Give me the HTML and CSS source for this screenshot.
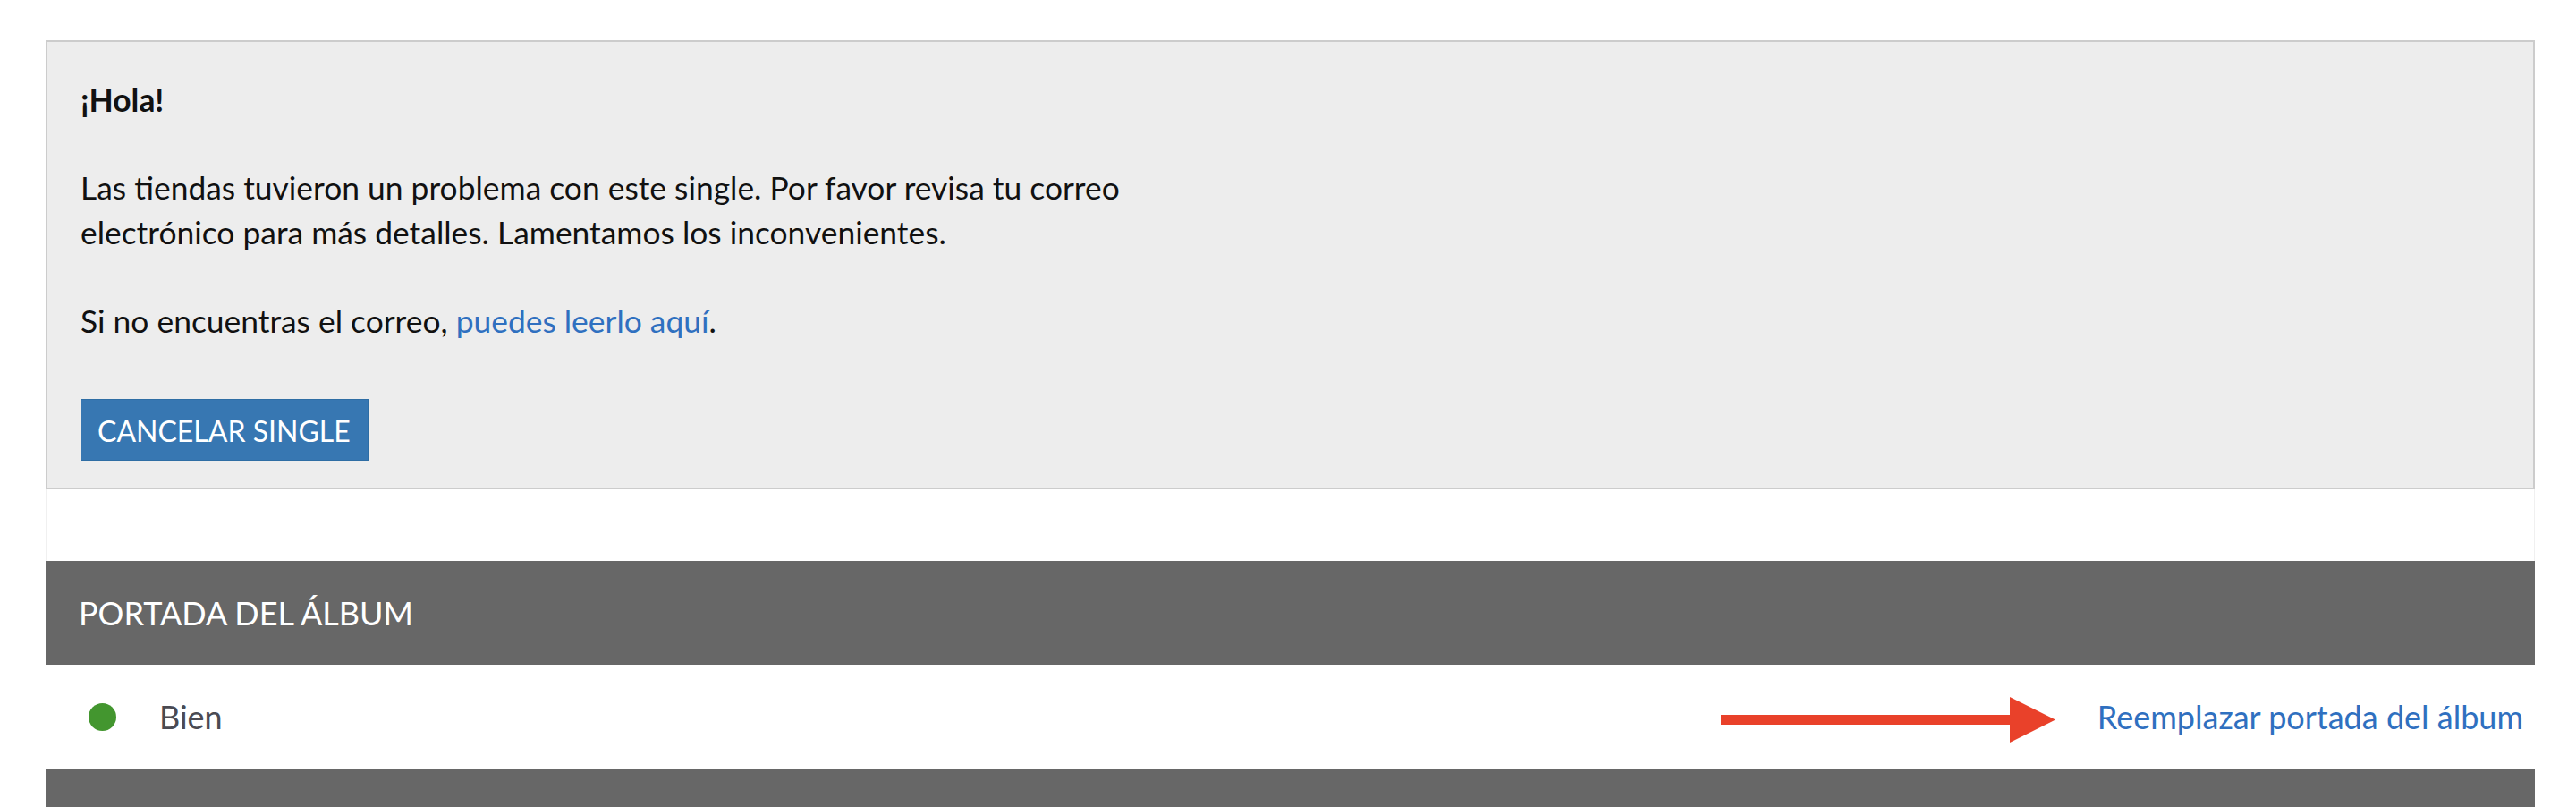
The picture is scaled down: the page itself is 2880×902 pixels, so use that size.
FILE: index.html
```html
<!DOCTYPE html>
<html lang="es">
<head>
<meta charset="utf-8">
<title>Single</title>
<link rel="stylesheet" href="styles.css">
</head>
<body>
<div class="page">
  <div class="notice">
    <p class="greet">¡Hola!</p>
    <p class="msg">Las tiendas tuvieron un problema con este single. Por favor revisa tu correo<br>electrónico para más detalles. Lamentamos los inconvenientes.</p>
    <p class="msg last">Si no encuentras el correo, <a href="#" class="inline-link">puedes leerlo aquí</a>.</p>
    <button class="btn-cancel" type="button">CANCELAR SINGLE</button>
  </div>
  <div class="spacer"></div>
  <div class="section-head">PORTADA DEL ÁLBUM</div>
  <div class="status-row">
    <span class="dot"></span>
    <span class="status-text">Bien</span>
    <a href="#" class="replace-link">Reemplazar portada del álbum</a>
    <svg class="arrow" width="374" height="51" viewBox="0 0 374 51" aria-hidden="true">
      <rect x="0" y="20" width="324" height="11" fill="#e9412a"/>
      <polygon points="323,0 374,25.5 323,51" fill="#e9412a"/>
    </svg>
  </div>
  <div class="section-head next"></div>
</div>
</body>
</html>
```

FILE: styles.css
```css
html, body {
  margin: 0;
  padding: 0;
  background: #ffffff;
}
body {
  font-family: Lato, "Open Sans", "Liberation Sans", sans-serif;
  color: #111111;
}
.page {
  padding-top: 45px;
  margin-left: 51px;
  width: 2783px;
}
.notice {
  background: #ededed;
  border: 2px solid #cccccc;
  padding: 40px 37px 30px 37px;
}
.notice p {
  margin: 0;
  font-size: 35.4px;
  line-height: 50px;
}
.greet {
  font-weight: 700;
  margin-bottom: 48px !important;
}
.msg {
  margin-bottom: 49px !important;
}
.msg.last {
  margin-bottom: 62px !important;
}
.inline-link {
  color: #2f70c0;
  text-decoration: none;
}
.btn-cancel {
  display: block;
  font-family: Lato, "Open Sans", "Liberation Sans", sans-serif;
  font-size: 32px;
  line-height: 40px;
  color: #ffffff;
  background: #3777b2;
  border: 1px solid #2e6da4;
  padding: 15px 19px 12px 18px;
  margin: 0;
  border-radius: 0;
  cursor: pointer;
}
.spacer {
  height: 80px;
  border-left: 1px solid #f0f0f0;
  border-right: 1px solid #f0f0f0;
}
.section-head {
  height: 116px;
  background: #676767;
  color: #ffffff;
  font-size: 36px;
  display: flex;
  align-items: center;
  padding-left: 37px;
}
.section-head.next {
  border-top: 1px solid #dddddd;
}
.status-row {
  position: relative;
  height: 116px;
  display: flex;
  align-items: center;
  padding-left: 48px;
  padding-right: 13px;
}
.dot {
  width: 31px;
  height: 31px;
  border-radius: 50%;
  background: #43962f;
  flex: none;
}
.status-text {
  margin-left: 48px;
  font-size: 36px;
  color: #4a4a52;
}
.replace-link {
  margin-left: auto;
  font-size: 36px;
  color: #2f70c0;
  text-decoration: none;
}
.arrow {
  position: absolute;
  left: 1873px;
  top: 36px;
}
```
